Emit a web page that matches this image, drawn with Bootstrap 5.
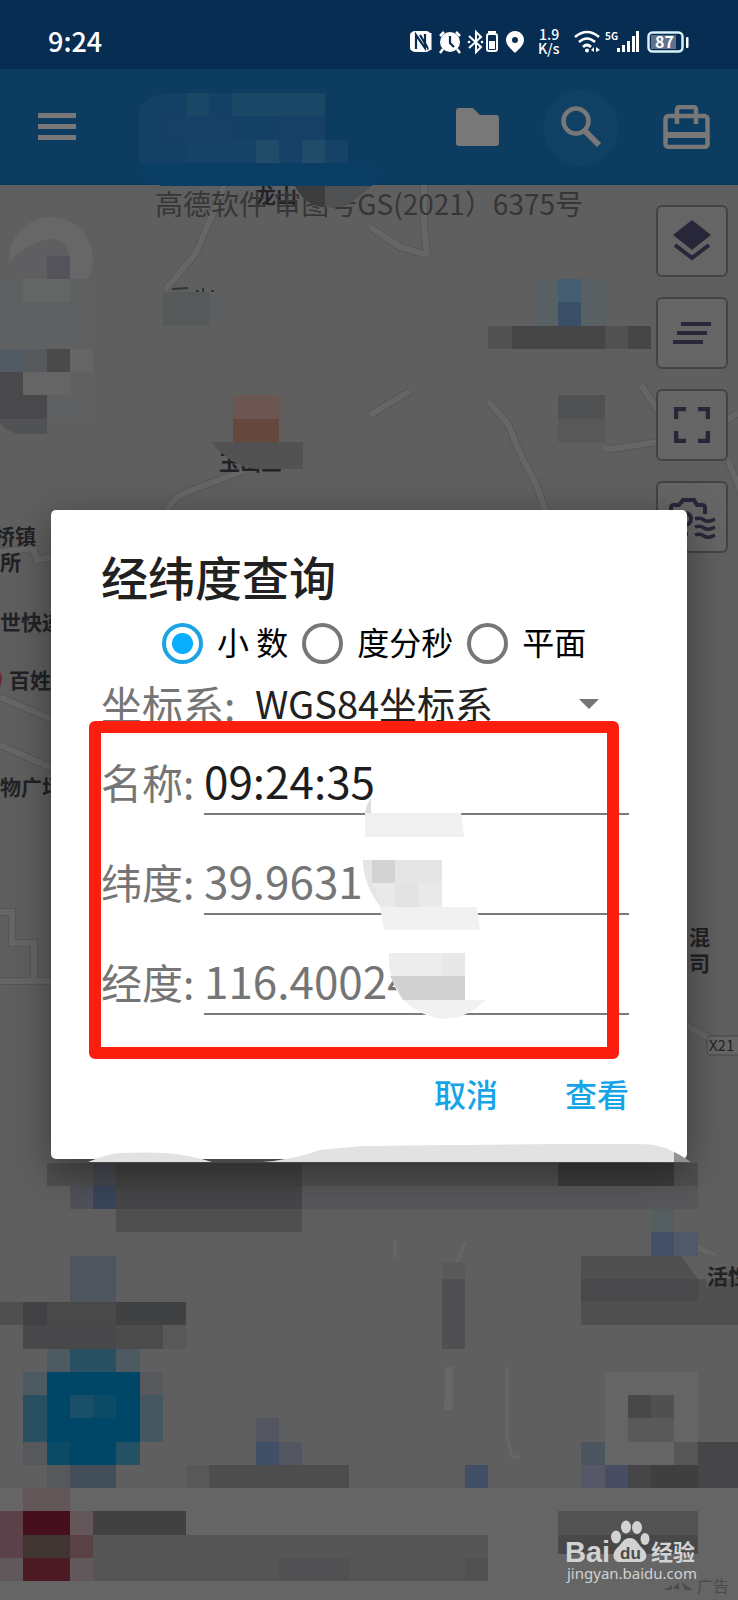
<!DOCTYPE html>
<html lang="zh-CN">
<head>
<meta charset="utf-8">
<meta name="viewport" content="width=device-width, initial-scale=1">
<title>经纬度查询</title>
<link href="https://cdn.jsdelivr.net/npm/bootstrap@5.3.0/dist/css/bootstrap.min.css" rel="stylesheet">
<style>
body{font-family:"Noto Sans CJK SC",sans-serif;background:#5f5f60;min-height:100vh;overflow-x:hidden}
.status-bar{background:#082d52;height:69px;padding:14px 48px 0;color:#fff}
.clock{font-size:27px;font-weight:500;line-height:54px}
.status-icons{margin-top:7px}
.app-bar{background:#0c3d61;height:116px;padding:0 28px 0 38px;z-index:2}
.app-bar .btn{--bs-btn-padding-x:0;--bs-btn-padding-y:0;border:0;color:#787878;line-height:1}
.app-bar svg,.map-tools svg{display:block}
.title-mosaic{left:0;top:0;pointer-events:none;overflow:visible}
.tool-set{gap:52px}
.map-area{padding:325px 51px 40px}
.map-drawing{left:0;top:0}
.approval{left:0;right:0;top:-2px;font-size:28px;line-height:40px;color:#363636}
.map-tools{right:10px;top:20px;gap:20px}
.map-tools .btn{width:72px;height:72px;padding:0;background:#656565;border:2px solid #434347;border-radius:6px;color:#282739;display:flex;align-items:center;justify-content:center}
.query-dialog{background:#fff;border-radius:5px;padding:36px 58px 40px 50px;box-shadow:0 12px 40px rgba(0,0,0,.4);color:#212121}
.query-dialog h1{font-size:47px;line-height:60px;font-weight:500}
.modes{height:66px;gap:14px;margin:4px 0 0 61px;font-size:32px;color:#000}
.modes label{line-height:40px;white-space:nowrap;margin-top:-4px}
.modes input{appearance:none;width:41px;height:41px;margin:0;border:4px solid #777;border-radius:50%;flex:none}
.modes input:checked{border-color:#1ba3e4;background:radial-gradient(circle,#08aefd 10px,#fff 11px)}
.field-name{font-size:41px;line-height:56px;color:#757575;white-space:nowrap;flex:none;padding-bottom:2px}
.system-row{height:56px}
.system-row .field-name{width:152px}
.system-row select{appearance:none;border:0;background:transparent;font-size:38px;line-height:50px;width:349px;padding:0 0 2px 2px;color:#212121}
.caret-down{right:30px;top:23px;border:10px solid transparent;border-top-color:#757575;border-bottom:0;pointer-events:none}
.value-row{height:100px}
.value-row .field-name{width:103px}
.value-row input{height:66px;border:0;border-bottom:2px solid #7b7b7b;font-size:44px;padding:0 0 2px;min-width:0;color:#757575;background:transparent;border-radius:0}
.value-row .strong-value{color:#1d1d1d}
.marked-box{top:-11px;left:-12px;right:10px;bottom:-27px;border:12px solid #fc1f10;border-radius:6px;pointer-events:none;z-index:2}
.dialog-actions{padding-top:37px;padding-bottom:2px;gap:67px}
.dialog-actions .btn{padding:0;border:0;font-size:32px;line-height:48px;font-weight:500;color:#16a4e8}
.dialog-mosaic{left:0;top:0;pointer-events:none;overflow:visible}
</style>
</head>
<body class="d-flex flex-column">
<header class="status-bar d-flex justify-content-between align-items-start">
  <div class="clock">9:24</div>
  <svg class="status-icons" width="282" height="40" viewBox="408 21 282 40" fill="#fff" font-family="Noto Sans CJK SC, sans-serif" aria-label="状态">
    <rect x="410" y="31" width="21" height="21" rx="5"/>
    <path d="M416 49V35l9 13V34M420 35l9 15" fill="none" stroke="#082d52" stroke-width="2.2"/><path d="M412 50V33M430 50V33" stroke="#fff" stroke-width="3"/>
    <circle cx="450" cy="42" r="10"/><path d="M440 36l4-4M460 36l-4-4M443 49l-3 4M457 49l3 4" stroke="#fff" stroke-width="2.5"/><path d="M450 36v7l4 4" fill="none" stroke="#082d52" stroke-width="2.2"/>
    <path d="M469 36l12 11-5 5V32l5 5-12 11" fill="none" stroke="#fff" stroke-width="2"/><circle cx="469" cy="42" r="1.3"/><circle cx="482" cy="42" r="1.3"/>
    <rect x="487" y="34" width="10" height="17" rx="2" fill="none" stroke="#fff" stroke-width="2"/><rect x="488" y="31" width="8" height="2"/><rect x="489" y="41" width="6" height="8"/>
    <path d="M515 31c-5 0-9 4-9 9 0 5 5 9 9 13 4-4 9-8 9-13 0-5-4-9-9-9z"/><circle cx="515" cy="40" r="3" fill="#082d52"/>
    <text x="539" y="40" font-size="14" font-weight="500">1.9</text><text x="538" y="54" font-size="14" font-weight="500">K/s</text>
    <g fill="none" stroke="#fff" stroke-width="2.6"><path d="M575 37q12-10 24 0M579 42q8-7 16 0M583 47q4-4 8 0"/></g><circle cx="587" cy="50.500" r="2"/><path d="M594 47l-3 3 3 2zM596 47l4 3-4 2z"/>
    <text x="605" y="40" font-size="10" font-weight="700">5G</text>
    <path d="M617 48h3v4h-3zM622 45h3v7h-3zM627 41h3v11h-3zM632 36h3v16h-3zM636 31h3v21h-3z"/>
    <rect x="648.500" y="32.500" width="34" height="19" rx="4" fill="none" stroke="#d8f0f8" stroke-width="2.500"/><rect x="651" y="35" width="25" height="14" fill="#60718e"/><rect x="686" y="37" width="2.500" height="11" rx="1"/>
    <text x="655" y="48" font-size="16" font-weight="700">87</text>
  </svg>
</header>
<nav class="app-bar position-relative d-flex align-items-center justify-content-between" aria-label="工具栏">
  <svg class="title-mosaic position-absolute" width="738" height="145" viewBox="0 69 738 145" shape-rendering="crispEdges" aria-hidden="true">
    <path d="M139 163v-52q4-16 32-18h154v70z" fill="#154066"/>
    <path d="M186 93h23v23h-23zM232 93h93v23h-93z" fill="#1b4767"/>
    <path d="M163 116h69v24h-69zM279 116h46v24h-46z" fill="#174067"/>
    <path d="M256 140h23v23h-23zM302 140h23v23h-23z" fill="#214b69"/>
    <path d="M186 140h70v23h-70zM279 140h23v23h-23zM325 140h23v23h-23z" fill="#164267"/>
    <path d="M134 163h244v15l-6 8H162q-24-5-28-23z" fill="#0b3e64"/>
    <path d="M295 186h30v21q-18 1-30-21z" fill="#3c3c3d"/><path d="M325 186h47l-24 19q-10 4-23 2z" fill="#505152"/>
  </svg>
  <button class="btn" type="button" aria-label="菜单"><svg width="38" height="28" viewBox="0 0 38 28" fill="currentColor"><path d="M0 0h38v5H0zM0 11h38v5H0zM0 22h38v5H0z"/></svg></button>
  <div class="tool-set d-flex align-items-center position-relative">
    <button class="btn" type="button" aria-label="文件夹"><svg width="43" height="38" viewBox="0 0 43 38" fill="currentColor"><path d="M3 0h14l7 7h16q3 0 3 3v25q0 3-3 3H3q-3 0-3-3V3q0-3 3-3z"/></svg></button>
    <button class="btn" type="button" aria-label="搜索"><svg width="60" height="84" viewBox="551 85 60 84" overflow="visible" fill="none" stroke="currentColor"><circle cx="581" cy="128" r="38" fill="#104064" stroke="none"/><circle cx="576" cy="121" r="12.500" stroke-width="4.500"/><path d="M585 131l14 14" stroke-width="6"/></svg></button>
    <button class="btn" type="button" aria-label="工具箱"><svg width="47" height="44" viewBox="0 0 47 44" fill="none" stroke="currentColor" stroke-width="4.500"><rect x="2.500" y="11" width="42" height="31" rx="3"/><path d="M2 30h43" stroke-width="6"/><path d="M14 19V5q0-3 3-3h13q3 0 3 3v14"/></svg></button>
  </div>
</nav>
<main class="map-area position-relative flex-grow-1 overflow-hidden">
  <svg class="map-drawing position-absolute w-100 h-100" viewBox="0 185 738 1415" preserveAspectRatio="xMidYMin slice" font-family="Noto Sans CJK SC, sans-serif" aria-label="地图">
    <rect y="185" width="738" height="1303" fill="#5f5f60"/>
    <defs><g id="roads"><path d="M228 176L212 215 196 253 165 290M424 180v45l3 30M370 227l30 20 27 8M370 415l40-24M167 510q8-14 20-18l58-22M488 401l20 23 14 34 14 26 14 40M738 413l-30 19-50 10-40 6q-10 2-16-1M641 385l20 30M728 460l12 30M0 552l33-4 4 12 20-4M0 697l60 26M0 745l54 24M0 912h12v31h22v36M0 981h52M687 1026l51 28M695 1246l24 12"/></g></defs>
    <use href="#roads" fill="none" stroke="#565657" stroke-width="8"/><use href="#roads" fill="none" stroke="#666667" stroke-width="6"/>
    <path d="M395 1240v18M465 1242l-9 22M507 1367v70l5 20h8" stroke="#666" stroke-width="3" fill="none"/><path d="M445 1367h8v43h-9z" fill="#676767"/>
    <circle cx="51" cy="259" r="42" fill="#676767"/><path d="M2 280q6-30 46-41 18 0 21 15v25z" fill="#5f5f61"/>
    <rect y="1488" width="738" height="112" fill="#656565"/>
    <g font-weight="700" font-size="21" fill="#222224">
      <text x="255" y="203">龙山</text><text x="219" y="470">玉山三</text>
      <text x="-6" y="544">桥镇</text><text x="0" y="570">所</text><text x="0" y="630">世快递</text><text x="9" y="688">百姓</text><text x="0" y="795">物广场</text>
      <text x="689" y="945">混</text><text x="689" y="971">司</text>
    </g>
    <path d="M0 672q4 6 0 15z" fill="#6b2b35"/>
    <rect x="707" y="1036" width="36" height="19" rx="3" fill="#666" stroke="#484848"/><text x="709" y="1051" font-size="15" fill="#252525">X21</text>
    <path d="M172 289l16-1M196 291h3M203 288v4M211 291h3" stroke="#333" stroke-width="2"/>
    <path d="M211 442h92v27h-41q-28 1-51-27z" fill="#525253"/>
    <g transform="scale(23.25)" shape-rendering="crispEdges">
      <path d="M2 11h1v1h-1z" fill="#535359"/><path d="M0 12h4v6H0z" fill="#5f6061"/><path d="M1 12h2v1h-2z" fill="#646565"/><path d="M0 15h1v1h-1z" fill="#525b63"/><path d="M1 15h1v1h-1z" fill="#58595c"/><path d="M2 15h1v1h-1z" fill="#4a4a4b"/><path d="M3 15h1v1h-1zM1 16h2v1h-2z" fill="#656565"/><path d="M0 16h1v1h-1zM0 17h2v1h-2z" fill="#49494b"/><path d="M0 18h2v.65H.7Q.2 18.500 0 18.200z" fill="#515253"/>
      <path d="M7 12.550h2v1.450h-2z" fill="#565959"/><path d="M9 12.600h1v1.400h-1z" fill="#5c5e5f"/>
      <path d="M10 17h2v1h-2z" fill="#6b5652"/><path d="M10 18h2v1h-2z" fill="#66483f"/>
      <path d="M23 12h1v2h-1zM25 12h1v2h-1z" fill="#586064"/><path d="M24 12h1v1h-1z" fill="#455d71"/><path d="M24 13h1v1h-1z" fill="#3b4f67"/><path d="M21 14h7v1h-7z" fill="#515152"/><path d="M22 14h4v1h-4zM27 14h1v1h-1z" fill="#464647"/><path d="M24 17h2v1h-2z" fill="#505152"/><path d="M24 18h2v1h-2z" fill="#585859"/>
      <path d="M2 50h28v1h-28z" fill="#4f4f50"/><path d="M4 50h1v1h-1z" fill="#45484f"/><path d="M5 50h8v1h-8z" fill="#434343"/><path d="M24 50h5v1h-5z" fill="#3b3b3b"/><path d="M13 51h17v1h-17z" fill="#58585a"/><path d="M3 51h1v1h-1z" fill="#505159"/><path d="M4 51h1v1h-1z" fill="#3a455a"/><path d="M5 51h8v1h-8z" fill="#464648"/><path d="M5 52h8v1h-8z" fill="#4f4f50"/>
      <path d="M3 54h2v2h-2z" fill="#4f555e"/><path d="M0 56h1v1h-1z" fill="#4f4f50"/><path d="M1 56h4v1h-4z" fill="#49494a"/><path d="M1 56h1v1h-1z" fill="#424244"/><path d="M5 56h3v1h-3z" fill="#404143"/><path d="M1 57h4v1h-4z" fill="#48474a"/><path d="M5 57h2v1h-2z" fill="#4c4c4d"/><path d="M7 57h1v1h-1z" fill="#575859"/>
      <path d="M2 58h1v1h-1zM5 58h1v1h-1zM1 59h1v1h-1z" fill="#4e5a61"/><path d="M3 58h2v1h-2zM1 60h1v2h-1z" fill="#285060"/><path d="M2 59h4v4h-4z" fill="#004767"/><path d="M3 60h1v1h-1z" fill="#194f68"/><path d="M4 60h1v1h-1zM2 62h1v1h-1z" fill="#0b4b66"/><path d="M5 62h1v1h-1z" fill="#245164"/><path d="M6 60h1v2h-1z" fill="#455760"/><path d="M6 59h1v1h-1zM1 62h1v1h-1zM2 63h1v1h-1z" fill="#56585b"/><path d="M3 63h2v1h-2z" fill="#434f58"/>
      <path d="M11 61h1v1h-1zM12 62h1v1h-1z" fill="#535661"/><path d="M11 62h1v1h-1zM20 63h1v1h-1z" fill="#425067"/><path d="M8 63h1v1h-1z" fill="#585858"/><path d="M9 63h6v1h-6z" fill="#4d4d4d"/>
      <path d="M19 54.300h1v.7h-1z" fill="#595959"/><path d="M19 55h1v3h-1z" fill="#505052"/>
      <path d="M28 52h1v1h-1z" fill="#555e61"/><path d="M28 53h1v1h-1z" fill="#435068"/><path d="M29 53h1v1h-1z" fill="#505969"/><path d="M25 54h4.300l.7 1h2v2h-7z" fill="#505051"/><path d="M25 55h5v1h-5z" fill="#49494b"/>
      <path d="M26 59h4v4h-4z" fill="#656565"/><path d="M27 60h1v1h-1z" fill="#484848"/><path d="M28 60h1v1h-1z" fill="#505051"/><path d="M27 61h2v1h-2z" fill="#595959"/><path d="M25 62h1v1h-1z" fill="#4a5560"/><path d="M29 62h1v1h-1z" fill="#565656"/><path d="M25 63h1v1h-1z" fill="#575867"/><path d="M26 63h1v1h-1z" fill="#484d61"/><path d="M27 63h5v1h-5zM30 62h2v1h-2z" fill="#464648"/><path d="M28 63h2v1h-2z" fill="#3f3f40"/>
      <path d="M1 64h2v1h-2zM3 65h1v1h-1z" fill="#625659"/><path d="M0 65h1v2h-1z" fill="#5a414a"/><path d="M1 65h2v1h-2z" fill="#460f1d"/><path d="M4 65h4v1h-4z" fill="#414141"/><path d="M1 66h2v1h-2z" fill="#403533"/><path d="M3 66h1v1h-1z" fill="#5a4145"/><path d="M0 67h1v1h-1zM3 67h1v1h-1z" fill="#60585a"/><path d="M1 67h2v1h-2z" fill="#4c1a22"/><path d="M4 66h17v2h-17z" fill="#555"/><path d="M12 67h3v1h-3zM20 67h1v1h-1z" fill="#515153"/><path d="M24 65h6v1h-6z" fill="#535353"/><path d="M24 66h6v.85h-6z" fill="#484848"/>
    </g>
    <path d="M697 1255h41v24h-24l-8 10q3-20-9-34z" fill="#5f5f60"/>
    <text x="707" y="1284" font-weight="700" font-size="21" fill="#222224">活性</text>
    <g fill="#d2d2d2">
      <text x="565" y="1562" font-family="Liberation Sans, sans-serif" font-weight="700" font-size="29">Bai</text>
      <ellipse cx="616" cy="1537" rx="5" ry="6.500"/><ellipse cx="626" cy="1527" rx="5" ry="6.500"/><ellipse cx="637" cy="1527.500" rx="5" ry="6.500"/><ellipse cx="645" cy="1539" rx="4.500" ry="6"/>
      <path d="M630 1538c6 0 8 6 12 10 8 7 4 15-4 14h-17c-8 1-10-8-4-14 5-4 6-10 13-10z"/>
      <text x="620" y="1559" font-family="Liberation Sans, sans-serif" font-weight="700" font-size="17" fill="#4a4a4a">du</text>
      <text x="651" y="1560" font-weight="700" font-size="22">经验</text>
      <text x="567" y="1579" font-family="Noto Sans, sans-serif" font-size="15">jingyan.baidu.com</text>
    </g>
    <path d="M664 1590l8-5v5zM673 1588l6-6v8M681 1582l12 8h-8z" fill="#4d4d4d"/><text x="697" y="1592" font-size="16" fill="#4b4b4b">广告</text>
  </svg>
  <div class="approval position-absolute text-center">高德软件 审图号GS(2021）6375号</div>
  <div class="map-tools position-absolute d-flex flex-column">
    <button class="btn" type="button" aria-label="图层"><svg width="38" height="42" viewBox="0 0 38 42" fill="currentColor"><path d="M19 0l19 15-19 15L0 15z"/><path d="M2 25l17 13 17-13" fill="none" stroke="currentColor" stroke-width="4"/></svg></button>
    <button class="btn" type="button" aria-label="列表"><svg width="38" height="22" viewBox="0 0 38 22" fill="currentColor"><path d="M8 0h30v4H8zM4 9h30v4H4zM0 18h30v4H0z"/></svg></button>
    <button class="btn" type="button" aria-label="全屏"><svg width="36" height="36" viewBox="0 0 36 36" fill="none" stroke="currentColor" stroke-width="4.500"><path d="M2 12V2h10M24 2h10v10M34 24v10H24M12 34H2V24"/></svg></button>
    <button class="btn" type="button" aria-label="水印相机"><svg width="46" height="38" viewBox="0 -1 46 38" overflow="visible" fill="none" stroke="currentColor" stroke-width="4"><path d="M19 35H4q-2 0-2-2V9q0-3 3-3h5l4-5h11l3 5h5q3 0 3 3v6"/><circle cx="16" cy="20" r="6"/><path d="M26 20q5-2 9 1t11-1M26 28q5-2 9 1t11-1M26 36q5-2 9 1t11-1" stroke-width="3.500"/></svg></button>
  </div>
  <form class="query-dialog position-relative" role="dialog" aria-labelledby="dialog-title">
    <h1 id="dialog-title" class="mb-0">经纬度查询</h1>
    <div class="modes d-flex align-items-center">
      <input type="radio" name="mode" id="decimal" checked><label for="decimal">小 数</label>
      <input type="radio" name="mode" id="dms"><label for="dms">度分秒</label>
      <input type="radio" name="mode" id="plane"><label for="plane">平面</label>
    </div>
    <div class="system-row d-flex align-items-center position-relative">
      <label class="field-name" for="system">坐标系:</label>
      <select id="system"><option>WGS84坐标系</option></select>
      <span class="caret-down position-absolute"></span>
    </div>
    <div class="position-relative">
      <div class="value-row d-flex align-items-center"><label class="field-name" for="place">名称:</label><input class="strong-value flex-grow-1" id="place" type="text" value="09:24:35"></div>
      <div class="value-row d-flex align-items-center"><label class="field-name" for="lat">纬度:</label><input class="flex-grow-1" id="lat" type="text" value="39.9631"></div>
      <div class="value-row d-flex align-items-center"><label class="field-name" for="lng">经度:</label><input class="flex-grow-1" id="lng" type="text" value="116.40024"></div>
      <div class="marked-box position-absolute"></div>
    </div>
    <div class="dialog-actions d-flex justify-content-end">
      <button class="btn" type="button">取消</button>
      <button class="btn" type="submit">查看</button>
    </div>
    <svg class="dialog-mosaic position-absolute w-100" viewBox="51 510 636 649" aria-hidden="true">
      <path d="M371 798v16h-6q1-9 6-16z" fill="#ddd"/><path d="M365 813h96l3 24h-99z" fill="#f0f0f1"/>
      <path d="M363 860h79v47h-61q-18-22-18-47z" fill="#e5e5e5"/><path d="M372 860h23v23h-23z" fill="#d3d3d4"/><path d="M442 883v24h-61l-8-24z" fill="#e9e9e9"/><path d="M395 883h23v24h-23z" fill="#e3e3e3"/>
      <path d="M380 907h97l3 23h-96z" fill="#f1f1f1"/>
      <path d="M389 953h76v47h-62q-15-18-14-47z" fill="#ededed"/><path d="M442 953h23v23h-23z" fill="#e8e8e8"/><path d="M390 976h75v24h-62z" fill="#d1d1d1"/>
      <path d="M403 1000h83q-40 38-83 0z" fill="#f1f1f1"/>
      <path d="M134 1159h76l55 3h-60zM210 1159h72l-20 3h-50z" fill="#484848"/>
      <path d="M88 1162q18-8 32-9 28-1 45 0 25 2 47 9zM262 1162q29-2 58-12 20-2 42-4 70-1 198-2h80q20 0 34 8 10 5 16 10z" fill="#e2e2e2"/><path d="M674 1152q10 5 16 10h-16z" fill="#929292"/>
    </svg>
  </form>
</main>
<script src="https://cdn.jsdelivr.net/npm/bootstrap@5.3.0/dist/js/bootstrap.bundle.min.js"></script>
</body>
</html>
